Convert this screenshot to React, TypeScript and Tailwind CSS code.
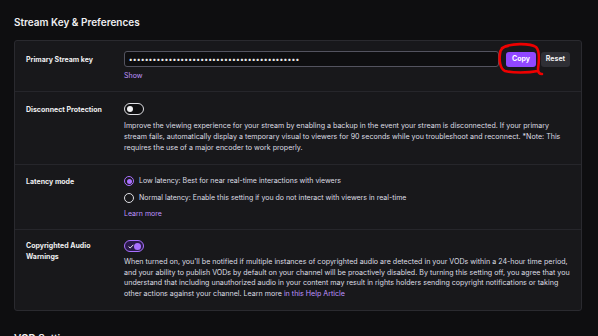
import React from 'react';

const Toggle = ({ on }: { on?: boolean }) => {
  if (on) {
    return (
      <div className="flex h-[12px] w-[20px] items-center justify-between rounded-full border-[1.5px] border-[#a970ff] bg-[#2a1a4a] px-[2px]">
        <svg width="6" height="5" viewBox="0 0 6 5" className="ml-[1px]">
          <path d="M0.6 2.6 L2.2 4 L5.4 0.8" stroke="#efeff1" strokeWidth="1" fill="none" />
        </svg>
        <span className="h-[7px] w-[7px] rounded-full bg-[#a970ff]" />
      </div>
    );
  }
  return (
    <div className="flex h-[12px] w-[20px] items-center rounded-full border-[1.5px] border-[#dedee3] bg-[#0e0e10] px-[2px]">
      <span className="h-[6px] w-[6px] rounded-full bg-[#efeff1]" />
    </div>
  );
};

const Radio = ({ checked, children }: { checked?: boolean; children: React.ReactNode }) => (
  <div className="flex h-[12px] items-center gap-[5px]">
    {checked ? (
      <span className="flex h-[10px] w-[10px] items-center justify-center rounded-full border-[1.5px] border-[#a970ff]">
        <span className="h-[5px] w-[5px] rounded-full bg-[#a970ff]" />
      </span>
    ) : (
      <span className="h-[10px] w-[10px] rounded-full border-[1.5px] border-[#dedee3]" />
    )}
    <span className="whitespace-nowrap text-[7px] text-[#dedee3]">{children}</span>
  </div>
);

const Row = ({ label, children }: { label: React.ReactNode; children: React.ReactNode }) => (
  <div className="flex px-[11px]">
    <div className="w-[98px] shrink-0 text-[7px] font-bold leading-[11px] text-[#efeff1]">{label}</div>
    <div className="flex-1">{children}</div>
  </div>
);

const App = () => {
  const dots = '•'.repeat(43);
  return (
    <div
      className="h-[336px] w-[598px] overflow-hidden bg-[#0e0e10] px-[14px] pt-[15px]"
      style={{ fontFamily: 'Inter, "Noto Sans", sans-serif' }}
    >
      <h1 className="text-[10px] font-semibold leading-[14px] text-[#efeff1]">Stream Key &amp; Preferences</h1>

      <div className="mt-[11px] w-[568px] rounded-[3px] border border-[#2a2a2f] bg-[#18181b]">
        <div className="h-[51px] border-b border-[#26262b] pt-[10px]">
          <Row label={<div className="pt-[3px]">Primary Stream key</div>}>
            <div className="relative flex items-center">
              <div className="flex h-[16px] w-[375px] items-center rounded-[3px] border border-[#53535f] bg-[#0e0e10] pl-[4px] text-[7px] font-bold leading-none tracking-[0.65px] text-[#efeff1]">
                {dots}
              </div>
              <button className="ml-[7px] h-[15px] w-[30px] rounded-[3px] bg-[#9147ff] text-[7px] font-bold text-white">
                Copy
              </button>
              <button className="ml-[5px] h-[15px] w-[29px] rounded-[3px] bg-[#2f2f35] text-[7px] font-bold text-[#efeff1]">
                Reset
              </button>
              <svg
                className="absolute left-[372px] top-[-9px]"
                width="48"
                height="34"
                viewBox="0 0 48 34"
                fill="none"
              >
                <path
                  d="M6 6 C14 1 34 1 40 5 C44 9 43 20 42 27 C42 31 44 32 46 32 M42 29 C32 31 16 31 9 29 C4 27 3 18 4 12 C4 8 6 5 12 4"
                  stroke="#ee0000"
                  strokeWidth="2.6"
                  strokeLinecap="round"
                />
              </svg>
            </div>
            <div className="mt-[3px] text-[7px] leading-[11px] text-[#bf94ff]">Show</div>
          </Row>
        </div>

        <div className="border-b border-[#26262b] py-[11px]">
          <Row label={<div className="pt-[1px]">Disconnect Protection</div>}>
            <Toggle />
            <p className="mt-[5px] whitespace-nowrap text-[7.1px] leading-[11px] text-[#dedee3]">
              Improve the viewing experience for your stream by enabling a backup in the event your stream is disconnected. If your primary
              <br />
              stream fails, automatically display a temporary visual to viewers for 90 seconds while you troubleshoot and reconnect. *Note: This
              <br />
              requires the use of a major encoder to work properly.
            </p>
          </Row>
        </div>

        <div className="border-b border-[#26262b] py-[10px]">
          <Row label={<div className="pt-[1px]">Latency mode</div>}>
            <div className="flex flex-col gap-[5px]">
              <Radio checked>Low latency: Best for near real-time interactions with viewers</Radio>
              <Radio>Normal latency: Enable this setting if you do not interact with viewers in real-time</Radio>
            </div>
            <div className="mt-[4px] text-[7px] leading-[11px] text-[#bf94ff]">Learn more</div>
          </Row>
        </div>

        <div className="py-[10px]">
          <Row
            label={
              <div>
                Copyrighted Audio
                <br />
                Warnings
              </div>
            }
          >
            <Toggle on />
            <p className="mt-[5px] whitespace-nowrap text-[7.1px] leading-[10.7px] text-[#dedee3]">
              When turned on, you'll be notified if multiple instances of copyrighted audio are detected in your VODs within a 24-hour time period,
              <br />
              and your ability to publish VODs by default on your channel will be proactively disabled. By turning this setting off, you agree that you
              <br />
              understand that including unauthorized audio in your content may result in rights holders sending copyright notifications or taking
              <br />
              other actions against your channel. Learn more <span className="text-[#bf94ff]">in this Help Article</span>
            </p>
          </Row>
        </div>
      </div>

      <h2 className="mt-[20px] text-[10px] font-semibold leading-[14px] text-[#efeff1]">VOD Settings</h2>
    </div>
  );
};

export default App;
